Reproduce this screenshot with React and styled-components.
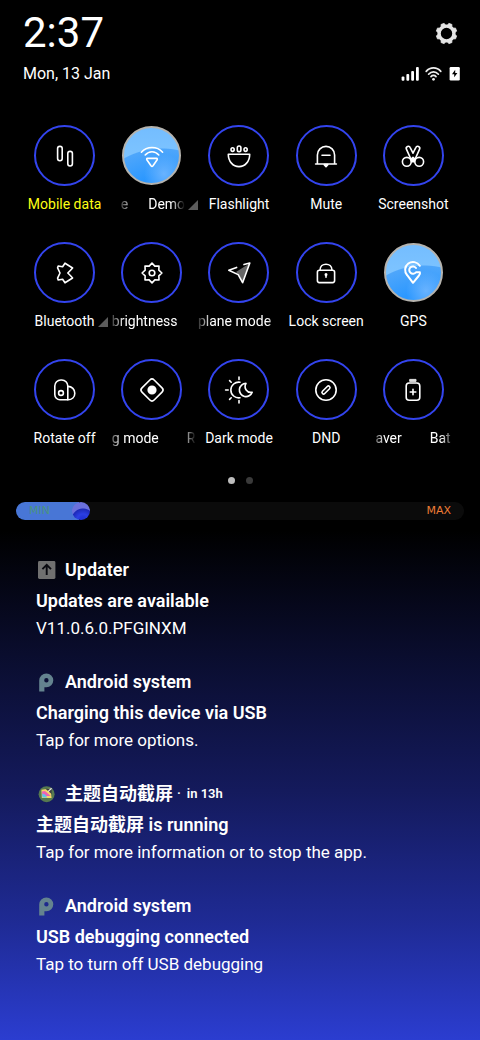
import React from 'react';
import styled, { createGlobalStyle } from 'styled-components';

const GlobalStyle = createGlobalStyle`
  * { box-sizing: border-box; }
  body { margin: 0; background: #000; }
  button { font: inherit; color: inherit; background: none; border: 0; padding: 0; cursor: pointer; }
  h2, h3, p { margin: 0; }
`;

const Shade = styled.main`
  min-height: 100vh;
  display: flex;
  flex-direction: column;
  color: #fff;
  font-family: Roboto, 'Noto Sans CJK SC', sans-serif;
  background: linear-gradient(#000 51%, #0a0d2e 63%, #141a5c 76%, #1f2b96 89%, #2b3dd0 100%);
`;

const Header = styled.header`
  display: flex;
  flex-direction: column;
  padding: 8px 20px 0 23px;
`;

const HeaderRow = styled.div`
  display: flex;
  align-items: center;
  justify-content: space-between;
`;

const Clock = styled.time`
  font-size: 42px;
  line-height: 50px;
`;

const DateText = styled.time`
  font-size: 16px;
  line-height: 32px;
`;

const SettingsButton = styled.button`
  display: flex;
  margin-right: 2px;
`;

const StatusIcons = styled.div`
  display: flex;
  align-items: center;
  gap: 6px;
`;

const Tiles = styled.section`
  display: grid;
  grid-template-columns: repeat(5, 1fr);
  row-gap: 26px;
  padding: 35px 23px 0 21px;
`;

const TileButton = styled.button`
  display: flex;
  flex-direction: column;
  align-items: center;
  gap: 6px;
  min-width: 0;
`;

const Ring = styled.span`
  display: flex;
  align-items: center;
  justify-content: center;
  width: 61px;
  height: 61px;
  border-radius: 50%;
  border: 2px solid #3344ee;
`;

const Orb = styled(Ring)`
  width: 59px;
  height: 59px;
  margin: 1px;
  border-color: #b5b3ae;
  background:
    radial-gradient(circle at 40px 46px, rgba(130, 190, 255, 0.7), transparent 20px),
    radial-gradient(circle at 38px 98px, #2c98ff 50px, #4ea6fb 77px, transparent 78px),
    linear-gradient(#74bdff, #86caff);
`;

const Glyph = styled.svg`
  width: 24px;
  height: 24px;
  overflow: visible;
  fill: none;
  stroke: #fff;
  stroke-width: 1.6;
  stroke-linecap: round;
  stroke-linejoin: round;
`;

const Label = styled.span`
  position: relative;
  display: block;
  font-size: 14px;
  line-height: 24px;
  white-space: nowrap;
  color: ${(p) => (p.$highlight ? '#ffff14' : '#fff')};
`;

const Ticker = styled.span`
  display: flex;
  gap: ${(p) => p.$gap || 0}px;
  width: ${(p) => p.$width}px;
  padding-left: ${(p) => p.$lead || 0}px;
  overflow: hidden;
  mask-image: linear-gradient(90deg, rgba(0, 0, 0, 0.1), #000 14px, #000 calc(100% - 14px), transparent);
`;

const Corner = styled.svg`
  position: absolute;
  left: 100%;
  bottom: 6px;
  margin-left: 3px;
  width: 10px;
  height: 10px;
  fill: #5c5c5c;
`;

const Pager = styled.nav`
  display: flex;
  justify-content: center;
  gap: 11px;
  padding: 27px 0 18px;
`;

const Dot = styled.button`
  && { background: ${(p) => (p.$current ? '#bdbdbd' : '#3a3a3a')}; }
  width: 7px;
  height: 7px;
  border-radius: 50%;
`;

const Brightness = styled.label`
  display: grid;
  align-items: center;
  margin: 0 16px;
  > * { grid-area: 1 / 1; }
`;

const Range = styled.input`
  appearance: none;
  width: 100%;
  height: 18px;
  margin: 0;
  border-radius: 9px;
  background: linear-gradient(90deg, #4876d6 14%, #0b0b0b 14%);
  &::-webkit-slider-thumb {
    appearance: none;
    width: 18px;
    height: 18px;
    border: 0;
    border-radius: 50%;
    background:
      radial-gradient(circle at 11px 18px, #2335d8 3px, #2b3fe4 6px, #1d2ab8 11px, transparent 12px),
      #6b70dc;
  }
`;

const RangeEnd = styled.span`
  justify-self: ${(p) => p.$side};
  margin: 0 13px;
  pointer-events: none;
  font: 11px/18px 'DejaVu Sans', sans-serif;
  color: ${(p) => p.$color};
`;

const Notifications = styled.section`
  display: flex;
  flex-direction: column;
  gap: 27px;
  padding: 36px 36px 60px;
`;

const Notice = styled.article`
  display: flex;
  flex-direction: column;
`;

const NoticeHeader = styled.header`
  display: flex;
  align-items: center;
  height: 28px;
  gap: 8px;
`;

const AppIcon = styled.svg`
  width: 21px;
  height: 21px;
`;

const AppName = styled.h2`
  font-size: 18px;
  line-height: 28px;
  font-weight: 600;
`;

const When = styled.small`
  display: flex;
  gap: 6px;
  margin-left: -4px;
  font-size: 13px;
  line-height: 28px;
  font-weight: 600;
`;

const NoticeTitle = styled.h3`
  padding-top: 3px;
  font-size: 18px;
  line-height: 28px;
  font-weight: 600;
`;

const NoticeText = styled.p`
  font-size: 17px;
  line-height: 26px;
`;

const polar = (r, degrees) => {
  const a = (degrees * Math.PI) / 180;
  return `${(r * Math.sin(a)).toFixed(2)},${(-r * Math.cos(a)).toFixed(2)}`;
};
const starPoints = Array.from({ length: 16 }, (_, i) => polar(i % 2 ? 7.4 : 9.9, i * 22.5)).join(' ');

const glyphs = {
  data: (
    <>
      <rect x="-7.4" y="-9.6" width="4.6" height="14.4" rx="2.2" />
      <rect x="2.8" y="-4.6" width="4.6" height="14.6" rx="2.2" />
    </>
  ),
  wifi: (
    <>
      <path d="M-10.6-3.8C-5-10 5-10 10.6-3.8M-6.8-1C-3-5.4 3-5.4 6.8-1" />
      <path d="M-4.6 2.4H4.6Q5.8 2.5 5 4L1 9.8Q0 11 -1 9.8L-5 4Q-5.8 2.5-4.6 2.4Z" />
    </>
  ),
  flashlight: (
    <>
      <path d="M-10.7-1.8H10.7C10.7 5.5 6 10.6 0 10.6S-10.7 5.5-10.7-1.8Z" />
      <rect x="-1.7" y="-10" width="3.6" height="5.6" rx="1.7" />
      <ellipse cx="-6.4" cy="-6.4" rx="1.6" ry="1.8" />
      <ellipse cx="6.6" cy="-6.4" rx="1.6" ry="1.8" />
    </>
  ),
  bell: (
    <>
      <path d="M-10.4 8H10.4M-8.6 8V-1A8.6 8.6 0 0 1 8.6-1V8M-4-.8H4" />
      <path d="M-1.8 8.6H1.8L0 10.6Z" fill="#fff" />
    </>
  ),
  scissors: (
    <>
      <circle cx="-6.2" cy="5.8" r="4.4" />
      <circle cx="6.2" cy="5.8" r="4.4" />
      <path d="M0-2.8L-2.8-8.4A2 2 0 0 0-6.6-6.8L-2 3.4M0-2.8L2.8-8.4A2 2 0 0 1 6.6-6.8L2 3.4" />
      <path d="M-2 3L0 1.4L2 3L1.4 5.6H-1.4Z" fill="#fff" />
    </>
  ),
  bluetooth: <path d="M0-9.8L7.6-5Q4.8-1.8 2.8 0Q4.8 1.8 7.6 5L0 9.8L-2.4 6.2L-6.8 7L-7.4 5.2L-5 0L-7.4-5.2L-6.8-7L-2.4-6.2Z" />,
  sun: (
    <>
      <polygon points={starPoints} />
      <circle r="2.8" />
    </>
  ),
  plane: (
    <>
      <path d="M-3-1L10.4-9.6L3.4 8L-.6 1.6Z" fill="#666" stroke="none" />
      <path d="M5-8.4L10.8-10L3.6 9.6L-.8 1.6L-10.2-2.8L-2.4-5.6" />
    </>
  ),
  lock: (
    <>
      <rect x="-8.6" y="-2.8" width="17.2" height="12.4" rx="2" />
      <path d="M-6-2.8C-6-10.8 6-10.8 6-2.8M0 2V4.2" />
      <circle cy="1.4" r=".7" fill="#fff" />
    </>
  ),
  pin: (
    <path
      strokeWidth="2"
      d="M6.8-7.2A7.9 7.9 0 1 0-5.8 2.2L0 9.8L5.6 3Q7.6 .8 6.9-.8H3A3.7 3.7 0 1 1 3-5"
    />
  ),
  rotate: (
    <>
      <path d="M-10.2-4A6 6 0 0 1-4.2-10H-3.2A6 6 0 0 1 2.8-4V9.8H-5A5.2 5.2 0 0 1-10.2 4.6Z" />
      <path d="M2.8-3.6C7-3.6 9.8-.6 9.8 3.2S7 9.8 2.8 9.8" />
      <circle cx="-4" cy="3" r="2.4" />
    </>
  ),
  reading: (
    <>
      <rect x="-8.6" y="-8.6" width="17.2" height="17.2" rx="3" transform="rotate(45)" />
      <circle r="3.8" fill="#fff" />
    </>
  ),
  dark: (
    <>
      <path d="M1-7.8A7.9 7.9 0 1 0 1 7.8" />
      <path d="M7-6.6A6.6 6.6 0 1 0 13.2 2.2C8 3.4 4.4-2 7-6.6Z" />
      <path d="M0-13V-10.6M0 10.6V13M-13.4 0H-10.8M-9.4-9.4L-7.8-7.8M-9.4 9.4L-7.8 7.8" />
    </>
  ),
  dnd: (
    <>
      <circle r="10.2" />
      <rect x="-5" y="-1.6" width="10" height="3.2" rx="1.6" transform="rotate(-45)" />
    </>
  ),
  battery: (
    <>
      <rect x="-6.8" y="-7" width="13.6" height="17.2" rx="3" />
      <path d="M0-.8V4.8M-2.8 2H2.8" />
      <rect x="-3" y="-10.6" width="6" height="2" fill="#ddd" stroke="#ddd" strokeWidth="1" />
    </>
  ),
};

const tiles = [
  { glyph: 'data', label: 'Mobile data', highlight: true },
  { glyph: 'wifi', parts: ['e', 'Demo'], width: 66, gap: 20, lead: 2, active: true, corner: true },
  { glyph: 'flashlight', label: 'Flashlight' },
  { glyph: 'bell', label: 'Mute' },
  { glyph: 'scissors', label: 'Screenshot' },
  { glyph: 'bluetooth', label: 'Bluetooth', corner: true },
  { glyph: 'sun', parts: ['brightness'], width: 84, lead: 2 },
  { glyph: 'plane', parts: ['plane mode'], width: 84, lead: 1 },
  { glyph: 'lock', label: 'Lock screen' },
  { glyph: 'pin', label: 'GPS', active: true },
  { glyph: 'rotate', label: 'Rotate off' },
  { glyph: 'reading', parts: ['g mode', 'R'], width: 88, gap: 28, lead: 4 },
  { glyph: 'dark', label: 'Dark mode' },
  { glyph: 'dnd', label: 'DND' },
  { glyph: 'battery', parts: ['aver', 'Bat'], width: 84, gap: 28, lead: 4 },
];

function Tile({ glyph, label, parts, width, gap, lead, active, corner, highlight }) {
  const Face = active ? Orb : Ring;
  return (
    <TileButton type="button" aria-pressed={!!active}>
      <Face>
        <Glyph viewBox="-12 -12 24 24">{glyphs[glyph]}</Glyph>
      </Face>
      <Label $highlight={highlight}>
        {parts ? (
          <Ticker $width={width} $gap={gap} $lead={lead}>
            {parts.map((part) => <span key={part}>{part}</span>)}
          </Ticker>
        ) : label}
        {corner && <Corner viewBox="0 0 10 10"><path d="M10 0V10H0Z" /></Corner>}
      </Label>
    </TileButton>
  );
}

const SystemIcon = () => (
  <AppIcon viewBox="0 0 21 21">
    <path
      fill="#64838f"
      fillRule="evenodd"
      d="M3.2 19.4V8.6A7.2 7.2 0 0 1 10.4 1.4A6.9 6.9 0 0 1 10.4 15.2H8.4V19.4ZM10.4 6A2.2 2.2 0 1 0 10.4 10.4A2.2 2.2 0 1 0 10.4 6Z"
    />
  </AppIcon>
);

const UpdaterIcon = () => (
  <AppIcon viewBox="0 0 21 21">
    <rect x="2" y="1" width="17.4" height="18" rx="1.4" fill="#707070" />
    <path d="M10.7 15V5M6.4 9.2L10.7 4.9L15 9.2" fill="none" stroke="#0a0a10" strokeWidth="1.9" />
  </AppIcon>
);

const ThemeIcon = () => (
  <AppIcon viewBox="0 0 21 21">
    <circle cx="10.6" cy="10.2" r="8" fill="#56794f" />
    <path d="M5.4 5.8L14.4 4.6L15.6 14H5.8Z" fill="#f5d568" />
    <path d="M6 7.4L9 7L14.8 12H6.2Z" fill="#ee62b4" />
    <path d="M6.2 9.6L9 10.4L11.4 13.4H6.4Z" fill="#5cc8ec" />
    <path d="M9.4 4.8L15.6 10V4.8Z" fill="#3b4040" />
    <path d="M12 7.6L15.6 4.2" stroke="#e8e8e8" strokeWidth="1.2" />
  </AppIcon>
);

const notices = [
  { Icon: UpdaterIcon, app: 'Updater', title: 'Updates are available', text: 'V11.0.6.0.PFGINXM' },
  { Icon: SystemIcon, app: 'Android system', title: 'Charging this device via USB', text: 'Tap for more options.' },
  { Icon: ThemeIcon, app: '主题自动截屏', when: 'in 13h', title: '主题自动截屏 is running', text: 'Tap for more information or to stop the app.' },
  { Icon: SystemIcon, app: 'Android system', title: 'USB debugging connected', text: 'Tap to turn off USB debugging' },
];

export default function App() {
  return (
    <Shade>
      <GlobalStyle />
      <Header>
        <HeaderRow>
          <Clock>2:37</Clock>
          <SettingsButton type="button" aria-label="Settings">
            <svg width="23" height="23" viewBox="-11.5 -11.5 23 23">
              <circle r="7.4" fill="none" stroke="#e4e4e4" strokeWidth="3.4" />
              {Array.from({ length: 8 }, (_, i) => (
                <path key={i} d="M-2.4-8L-1.7-10.4H1.7L2.4-8Z" fill="#e4e4e4" stroke="#e4e4e4" strokeWidth=".6" strokeLinejoin="round" transform={`rotate(${i * 45 + 22.5})`} />
              ))}
            </svg>
          </SettingsButton>
        </HeaderRow>
        <HeaderRow>
          <DateText>Mon, 13 Jan</DateText>
          <StatusIcons>
            <svg width="18" height="14" viewBox="0 0 18 14" fill="#fff">
              <rect x=".6" y="9.4" width="2.8" height="4.4" rx="1" />
              <rect x="5.4" y="7" width="2.8" height="6.8" rx="1" />
              <rect x="10.2" y="4" width="2.8" height="9.8" rx="1" />
              <rect x="15" y="0" width="2.8" height="13.8" rx="1" />
            </svg>
            <svg width="17" height="14" viewBox="0 0 17 14" fill="none" stroke="#eee" strokeWidth="1.7" strokeLinecap="round">
              <path d="M1.2 4.4C5.2-.2 11.8-.2 15.8 4.4M3.6 7.2C6.4 4 10.6 4 13.4 7.2M6 9.6C7.4 8 9.6 8 11 9.6" />
              <circle cx="8.5" cy="12.3" r="1.4" fill="#eee" stroke="none" />
            </svg>
            <svg width="12" height="14" viewBox="0 0 12 14">
              <rect x="1.6" y="0" width="10.2" height="13.4" rx="1.2" fill="#fff" />
              <path d="M7.2 2.8L4 7.2H6.2L6.2 10.2L9.4 6H7.2Z" fill="#000" />
            </svg>
          </StatusIcons>
        </HeaderRow>
      </Header>

      <Tiles>
        {tiles.map((tile) => <Tile key={tile.glyph} {...tile} />)}
      </Tiles>

      <Pager>
        <Dot type="button" aria-label="Page 1" $current />
        <Dot type="button" aria-label="Page 2" />
      </Pager>

      <Brightness>
        <Range type="range" min="0" max="255" defaultValue="33" aria-label="Brightness" />
        <RangeEnd $side="start" $color="#4a9382">MIN</RangeEnd>
        <RangeEnd $side="end" $color="#ee7c36">MAX</RangeEnd>
      </Brightness>

      <Notifications>
        {notices.map(({ Icon, app, when, title, text }) => (
          <Notice key={title}>
            <NoticeHeader>
              <Icon />
              <AppName>{app}</AppName>
              {when && <When><span>·</span><span>{when}</span></When>}
            </NoticeHeader>
            <NoticeTitle>{title}</NoticeTitle>
            <NoticeText>{text}</NoticeText>
          </Notice>
        ))}
      </Notifications>
    </Shade>
  );
}
